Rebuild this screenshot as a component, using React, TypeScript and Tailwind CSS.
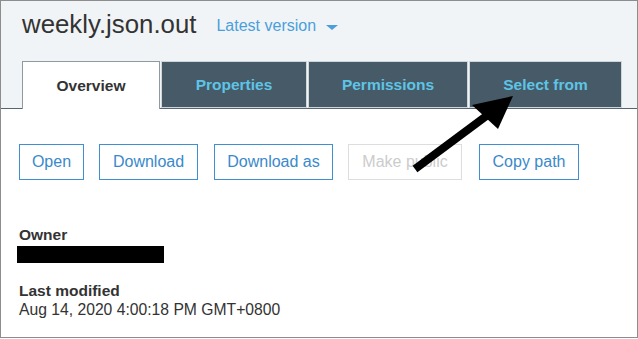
import React from 'react';

const tabs = [
  { label: 'Properties', w: 'w-[146px]' },
  { label: 'Permissions', w: 'w-[160px]' },
  { label: 'Select from', w: 'w-[153px]' },
];

const App: React.FC = () => {
  return (
    <div className="relative w-[638px] h-[338px] overflow-hidden border border-[#8d8d8d] bg-white font-['Liberation_Sans',Arial,sans-serif] text-[#333]">
      {/* header */}
      <div className="flex h-[108px] flex-col border-b border-[#56656f] bg-[#f1f4f6]">
        <div className="flex items-start pl-[21px]">
          <h1 className="mt-[11px] text-[25.8px] leading-[25px] text-[#333]">weekly.json.out</h1>
          <button className="ml-[20px] mt-[17px] flex items-start text-[16px] leading-none text-[#4a9fdb]">
            Latest version
            <svg width="12" height="6" viewBox="0 0 12 6" className="ml-[10px] mt-[7px]">
              <path d="M0 0h12L6 5z" fill="#4a9fdb" />
            </svg>
          </button>
        </div>
        <div className="mt-auto flex items-end gap-px pl-[21px]">
          <div className="relative -mb-px flex h-[48px] w-[138px] items-center justify-center border border-b-0 border-[#8e9aa1] bg-white text-[15.5px] font-bold text-[#333]">
            Overview
          </div>
          {tabs.map((t) => (
            <div
              key={t.label}
              className={`flex h-[47px] ${t.w} items-center justify-center border border-[#cfd6da] bg-[#465a67] text-[15.5px] font-bold text-[#5ec4e6]`}
            >
              {t.label}
            </div>
          ))}
        </div>
      </div>

      {/* content */}
      <div className="pl-[18px]">
        <div className="mt-[35px] flex text-[16px]">
          <button className="flex h-[36px] w-[65px] items-center justify-center border border-[#3f8fd2] text-[#3a89cb]">Open</button>
          <button className="ml-[15px] flex h-[36px] w-[99px] items-center justify-center border border-[#3f8fd2] text-[#3a89cb]">Download</button>
          <button className="ml-[16px] flex h-[36px] w-[119px] items-center justify-center border border-[#3f8fd2] text-[#3a89cb]">Download as</button>
          <button className="ml-[15px] flex h-[36px] w-[114px] items-center justify-center border border-[#dddddd] text-[#cccccc]">Make public</button>
          <button className="ml-[17px] flex h-[36px] w-[100px] items-center justify-center border border-[#3f8fd2] text-[#3a89cb]">Copy path</button>
        </div>

        <div className="mt-[46px] text-[15.5px] font-bold leading-[18px]">Owner</div>
        <div className="-ml-[2px] mt-[2px] h-[17px] w-[147px] bg-black" />
        <div className="mt-[19px] text-[15.5px] font-bold leading-[18px]">Last modified</div>
        <div className="mt-px text-[15.7px] leading-[18px]">Aug 14, 2020 4:00:18 PM GMT+0800</div>
      </div>

      {/* annotation arrow */}
      <svg className="pointer-events-none absolute left-0 top-0" width="638" height="338" viewBox="0 0 638 338">
        <line x1="414" y1="168" x2="488" y2="113" stroke="#000" strokeWidth="8" />
        <polygon points="512,95 471,104 497,128" fill="#000" />
      </svg>
    </div>
  );
};

export default App;
